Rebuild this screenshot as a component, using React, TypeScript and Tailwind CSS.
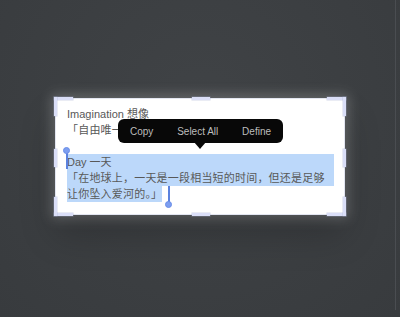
import React from "react";

const font = { fontFamily: '"Liberation Sans", "Noto Sans CJK SC", sans-serif' };

function Handles() {
  const c = "absolute bg-[#dadef7] shadow-[0_0_0_0.5px_rgba(160,170,205,0.45)]";
  return (
    <>
      <div className={`${c} -left-[2px] -top-[2px] w-[19px] h-[3px]`} />
      <div className={`${c} -left-[2px] -top-[2px] w-[3px] h-[19px]`} />
      <div className={`${c} -right-[2px] -top-[2px] w-[19px] h-[3px]`} />
      <div className={`${c} -right-[2px] -top-[2px] w-[3px] h-[19px]`} />
      <div className={`${c} -left-[2px] -bottom-[2px] w-[19px] h-[3px]`} />
      <div className={`${c} -left-[2px] -bottom-[2px] w-[3px] h-[19px]`} />
      <div className={`${c} -right-[2px] -bottom-[2px] w-[19px] h-[3px]`} />
      <div className={`${c} -right-[2px] -bottom-[2px] w-[3px] h-[19px]`} />
      <div className={`${c} left-[136px] -top-[2px] w-[18px] h-[3px]`} />
      <div className={`${c} left-[136px] -bottom-[2px] w-[18px] h-[3px]`} />
      <div className={`${c} -left-[2px] top-[50px] w-[3px] h-[18px]`} />
      <div className={`${c} -right-[2px] top-[50px] w-[3px] h-[18px]`} />
    </>
  );
}

export default function App() {
  return (
    <div
      className="w-[400px] h-[317px] flex bg-[radial-gradient(ellipse_at_50%_35%,#404346_0%,#3c3f42_50%,#383b3e_100%)] overflow-hidden"
      style={font}
    >
      <div className="flex-1 pl-[55px] pt-[98px]">
        <div className="relative w-[290px] h-[117px] bg-white border border-[#e2e5f0] shadow-[0_0_12px_4px_rgba(255,255,255,0.2),0_20px_34px_rgba(0,0,0,0.2)] box-border">
          <div className="pl-[11px] pt-[7px] w-[278px] text-[11px] leading-[16px] text-[#585858]">
            <div>Imagination 想像</div>
            <div className="tracking-[0.2px] whitespace-nowrap overflow-hidden">「自由唯一的是想像」</div>
            <div className="h-[16px]" />
            <div className="bg-[#bcd8fa]">Day 一天</div>
            <div className="bg-[#bcd8fa] tracking-[0.2px] whitespace-nowrap">
              「在地球上，一天是一段相当短的时间，但还是足够
            </div>
            <div>
              <span className="bg-[#bcd8fa] tracking-[0.2px] inline-block">让你坠入爱河的。」</span>
            </div>
          </div>

          <Handles />

          <div className="absolute left-[10px] top-[52px] w-[1.5px] h-[18px] bg-[#5b82de]" />
          <div className="absolute left-[7px] top-[48px] w-[7px] h-[7px] rounded-full bg-[#7d9ef0] border border-[#6a8ee8]" />
          <div className="absolute left-[112px] top-[87px] w-[1.5px] h-[18px] bg-[#5b82de]" />
          <div className="absolute left-[109px] top-[102px] w-[7px] h-[7px] rounded-full bg-[#7d9ef0] border border-[#6a8ee8]" />

          <div className="absolute left-[62px] top-[20px] w-[165px] h-[24px] rounded-[6px] bg-[#080808] flex items-center justify-between px-[12px] text-[10px] text-[#bdbdbd]">
            <span>Copy</span>
            <span>Select All</span>
            <span>Define</span>
            <div className="absolute left-[76px] top-[23px] w-0 h-0 border-l-[6px] border-r-[6px] border-t-[7px] border-l-transparent border-r-transparent border-t-[#080808]" />
          </div>
        </div>
      </div>
      <div className="w-[1px] h-[310px] bg-[#4a4d51]" />
      <div className="w-[4px]" />
    </div>
  );
}
